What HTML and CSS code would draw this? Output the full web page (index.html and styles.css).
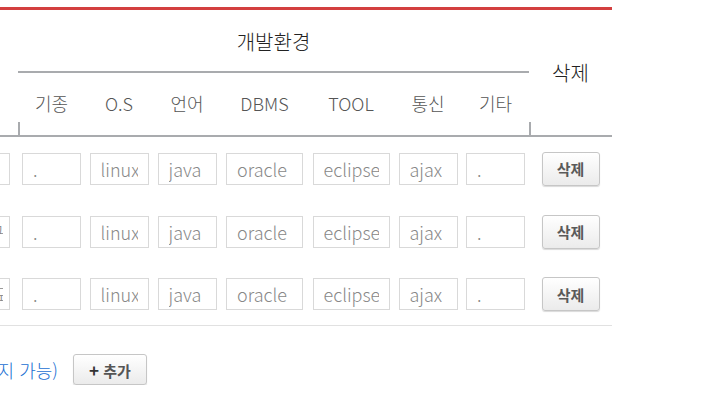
FILE: index.html
```html
<!DOCTYPE html>
<html lang="ko">
<head>
<meta charset="UTF-8">
<meta name="viewport" content="width=device-width, initial-scale=1.0">
<title>개발환경 입력</title>
<link rel="stylesheet" href="styles.css">
</head>
<body>

<div class="board">

<table class="env-table">
<colgroup>
<col class="c-name">
<col class="c-67">
<col class="c-68">
<col class="c-68">
<col class="c-87">
<col class="c-86">
<col class="c-68">
<col class="c-67">
<col class="c-del">
</colgroup>
<thead>
<tr class="head-top">
<th rowspan="2" class="name-head"></th>
<th colspan="7" class="group">개발환경</th>
<th rowspan="2" class="del-head">삭제</th>
</tr>
<tr class="head-sub">
<th class="first">기종</th>
<th>O.S</th>
<th>언어</th>
<th>DBMS</th>
<th>TOOL</th>
<th>통신</th>
<th>기타</th>
</tr>
</thead>
<tbody>
<tr>
<td><input class="in-name" type="text" value=""></td>
<td><input class="in-sm" type="text" value="."></td>
<td><input class="in-sm" type="text" value="linux"></td>
<td><input class="in-sm" type="text" value="java"></td>
<td><input class="in-lg" type="text" value="oracle"></td>
<td><input class="in-lg" type="text" value="eclipse"></td>
<td><input class="in-sm" type="text" value="ajax"></td>
<td><input class="in-sm" type="text" value="."></td>
<td><button class="btn-del" type="button">삭제</button></td>
</tr>
<tr>
<td><input class="in-name" type="text" value="쇼핑몰 구축 프로젝트"></td>
<td><input class="in-sm" type="text" value="."></td>
<td><input class="in-sm" type="text" value="linux"></td>
<td><input class="in-sm" type="text" value="java"></td>
<td><input class="in-lg" type="text" value="oracle"></td>
<td><input class="in-lg" type="text" value="eclipse"></td>
<td><input class="in-sm" type="text" value="ajax"></td>
<td><input class="in-sm" type="text" value="."></td>
<td><button class="btn-del" type="button">삭제</button></td>
</tr>
<tr>
<td><input class="in-name" type="text" value="2015 고도화 2015"></td>
<td><input class="in-sm" type="text" value="."></td>
<td><input class="in-sm" type="text" value="linux"></td>
<td><input class="in-sm" type="text" value="java"></td>
<td><input class="in-lg" type="text" value="oracle"></td>
<td><input class="in-lg" type="text" value="eclipse"></td>
<td><input class="in-sm" type="text" value="ajax"></td>
<td><input class="in-sm" type="text" value="."></td>
<td><button class="btn-del" type="button">삭제</button></td>
</tr>
</tbody>
</table>

<div class="add-row">
<div class="note-box"><span class="note">(최대 10개까지 가능)</span></div>
<button class="btn-add" type="button"><span class="plus">+</span> 추가</button>
</div>

</div>

</body>
</html>
```

FILE: styles.css
```css
body {
    margin: 0;
    background: #fff;
    font-family: "Noto Sans CJK KR", "Noto Sans", sans-serif;
    color: #333;
}

.board {
    width: 694px;
    margin: 7px 0 0 -82px;
}

.env-table {
    width: 694px;
    table-layout: fixed;
    border-collapse: separate;
    border-spacing: 0;
    border-top: 3px solid #d33f3f;
}

.c-name { width: 100px; }
.c-67 { width: 67px; }
.c-68 { width: 68px; }
.c-87 { width: 87px; }
.c-86 { width: 86px; }
.c-del { width: 83px; }

th {
    padding: 0;
    font-weight: normal;
    text-align: center;
    border-bottom: 2px solid #a9abae;
}

.head-top { height: 63px; }
.head-sub { height: 64px; }

.head-top th {
    font-size: 20px;
    font-weight: 300;
    color: #222;
}

.head-top th.group {
    vertical-align: middle;
    padding-top: 2px;
}

.head-sub th {
    font-size: 18px;
    font-weight: 300;
    color: #555;
    padding-bottom: 2px;
}

.head-sub th.first,
.head-top th.del-head {
    background: linear-gradient(#a9abae, #a9abae) left bottom / 2px 13px no-repeat;
}

tbody tr { height: 63px; }

td {
    padding: 0;
    text-align: center;
    vertical-align: middle;
}

tbody tr:last-child td {
    border-bottom: 1px solid #e1e1e1;
}

input {
    box-sizing: border-box;
    height: 32px;
    padding: 0 10px;
    border: 1px solid #d9d9d9;
    background: #fff;
    font-family: "Noto Sans CJK KR", "Noto Sans", sans-serif;
    font-size: 18px;
    font-weight: 300;
    color: #888;
}

.in-name { width: 84px; padding: 0 6px; }
.in-sm { width: 59px; }
.in-lg { width: 77px; }

.btn-del {
    box-sizing: border-box;
    width: 58px;
    height: 34px;
    padding: 0;
    border: 1px solid #c6c6c6;
    border-radius: 3px;
    background: linear-gradient(#ffffff, #ebebeb);
    box-shadow: 0 1px 1px rgba(0, 0, 0, 0.15);
    font-family: "Noto Sans CJK KR", sans-serif;
    font-size: 15px;
    font-weight: bold;
    color: #5a5a5a;
}

.add-row {
    display: flex;
    align-items: center;
    margin-top: 28px;
}

.note-box {
    width: 140px;
    display: flex;
    justify-content: flex-end;
    margin-right: 15px;
}

.note {
    white-space: nowrap;
    font-size: 18px;
    font-weight: 300;
    color: #1a6fd2;
}

.btn-add {
    box-sizing: border-box;
    width: 74px;
    height: 31px;
    padding: 0;
    border: 1px solid #c6c6c6;
    border-radius: 3px;
    background: linear-gradient(#ffffff, #ebebeb);
    box-shadow: 0 1px 1px rgba(0, 0, 0, 0.15);
    font-family: "Noto Sans CJK KR", sans-serif;
    font-size: 15px;
    font-weight: bold;
    color: #555;
}

.plus {
    font-size: 17px;
    color: #333;
}
```
